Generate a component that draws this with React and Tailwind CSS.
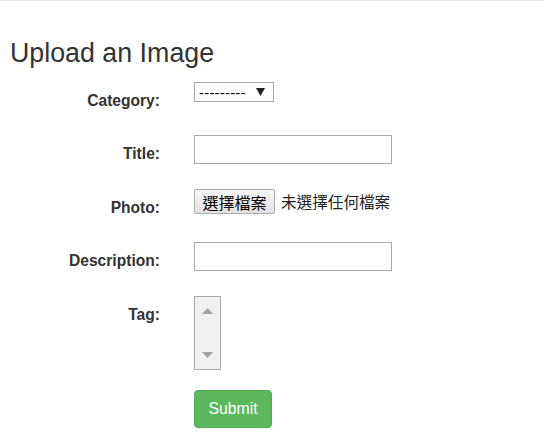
import React from "react";

const labelCls =
  "w-[150px] shrink-0 pt-[8px] text-right text-[15.6px] leading-[22px] font-bold text-[#333]";

const Row = ({ label, h, children }) => (
  <div className={`flex ${h}`}>
    <label className={labelCls}>{label}</label>
    <div className="ml-[34px]">{children}</div>
  </div>
);

const App = () => {
  return (
    <div
      className="min-h-screen bg-white border-t border-[#e3e3e3] pl-[10px]"
      style={{ fontFamily: '"Liberation Sans", Arial, sans-serif' }}
    >
      <h3 className="mt-[38px] text-[26.8px] leading-[29px] font-normal text-[#333]">
        Upload an Image
      </h3>

      <form className="mt-[14px]">
        <Row label="Category:" h="h-[53px]">
          <div className="flex h-[20px] w-[80px] items-center border border-[#a9a9a9] bg-white pl-[4px]">
            <span className="text-[15px] leading-none tracking-[0.2px] text-black">---------</span>
            <svg className="ml-[10px]" width="9" height="8" viewBox="0 0 9 8">
              <polygon points="0,0 9,0 4.5,8" fill="#222" />
            </svg>
          </div>
        </Row>

        <Row label="Title:" h="h-[54px]">
          <input
            type="text"
            className="h-[29px] w-[198px] border border-[#a9a9a9] bg-white outline-none"
          />
        </Row>

        <Row label="Photo:" h="h-[53px]">
          <div
            className="flex items-center"
            style={{ fontFamily: '"Noto Sans CJK TC", "Noto Sans CJK SC", sans-serif' }}
          >
            <button
              type="button"
              className="h-[25px] w-[81px] rounded-[2px] border border-[#adadad] bg-gradient-to-b from-[#f6f6f6] to-[#e1e1e1] text-[16px] leading-none text-black"
            >
              選擇檔案
            </button>
            <span className="ml-[6px] text-[15.6px] leading-none text-[#222]">未選擇任何檔案</span>
          </div>
        </Row>

        <Row label="Description:" h="h-[54px]">
          <input
            type="text"
            className="h-[29px] w-[198px] border border-[#a9a9a9] bg-white outline-none"
          />
        </Row>

        <Row label="Tag:" h="h-[94px]">
          <div className="flex h-[74px] w-[27px] flex-col items-center justify-between border border-[#a9a9a9] bg-[#f0f0f0] py-[11px]">
            <svg width="11" height="6" viewBox="0 0 11 6">
              <polygon points="0,6 11,6 5.5,0" fill="#a3a3a3" />
            </svg>
            <svg width="11" height="6" viewBox="0 0 11 6">
              <polygon points="0,0 11,0 5.5,6" fill="#a3a3a3" />
            </svg>
          </div>
        </Row>

        <div className="flex">
          <div className="w-[150px] shrink-0" />
          <button
            type="button"
            className="ml-[34px] h-[38px] w-[78px] rounded-[4px] border border-[#4cae4c] bg-[#5cb85c] text-[15.8px] text-white"
          >
            Submit
          </button>
        </div>
      </form>
    </div>
  );
};

export default App;
